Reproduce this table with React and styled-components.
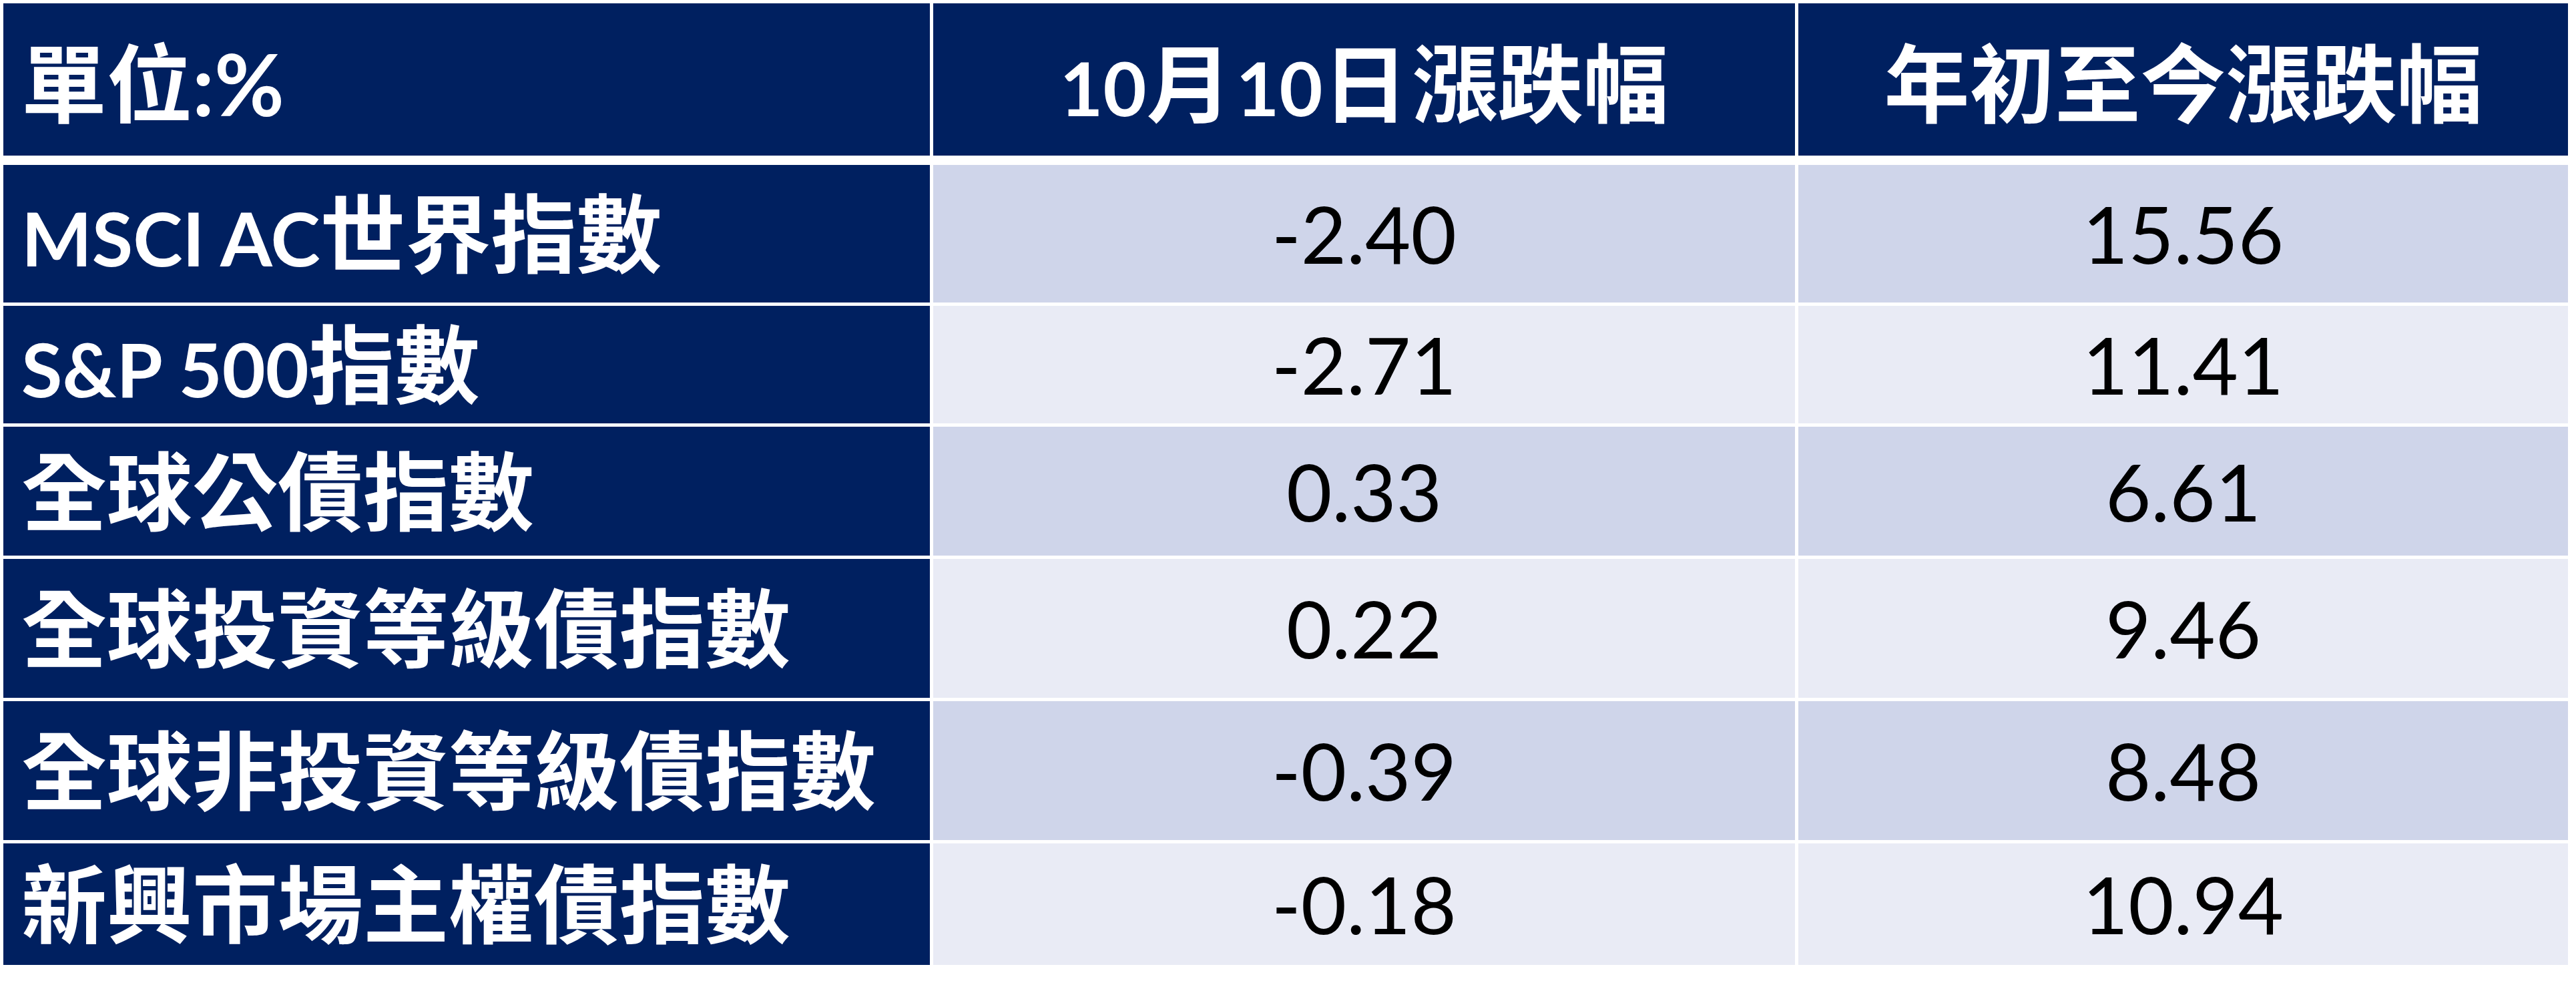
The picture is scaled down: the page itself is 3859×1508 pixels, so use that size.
import React from 'react';
import styled, { createGlobalStyle } from 'styled-components';

const GlobalStyle = createGlobalStyle`
  html, body {
    margin: 0;
    padding: 0;
    background: #ffffff;
  }
  body {
    font-family: Lato, "Noto Sans CJK TC", sans-serif;
  }
`;

const Page = styled.div`
  width: 3859px;
  height: 1508px;
  box-sizing: border-box;
  padding: 5px 0 0 5px;
  background: #ffffff;
`;

const Table = styled.div`
  display: flex;
  flex-direction: column;
  gap: 5px;
  width: 3842px;
`;

const Row = styled.div`
  display: grid;
  grid-template-columns: 1388px 1291px 1153px;
  column-gap: 5px;
  height: ${(p) => p.$h}px;
  margin-bottom: ${(p) => (p.$head ? 9 : 0)}px;
`;

const bgFor = (v) =>
  v === 'navy' ? '#002060' : v === 'odd' ? '#CFD5EA' : '#E9EBF5';

const Cell = styled.div`
  display: flex;
  align-items: center;
  justify-content: ${(p) => (p.$center ? 'center' : 'flex-start')};
  padding-left: ${(p) => (p.$center ? 0 : 27)}px;
  background: ${(p) => bgFor(p.$bg)};
  color: ${(p) => (p.$bg === 'navy' ? '#ffffff' : '#000000')};
  white-space: nowrap;
  overflow: hidden;
`;

const LabelText = styled.span`
  font-family: Lato, "Noto Sans CJK TC", sans-serif;
  font-weight: 700;
  font-size: 128px;
  line-height: 1;
  transform: translateY(${(p) => p.$dy || 0}px);
`;

const Latin = styled.span`
  font-size: 112px;
  margin-right: ${(p) => p.$gap || 0}px;
`;

const NumText = styled.span`
  font-family: Lato, "Noto Sans CJK TC", sans-serif;
  font-weight: 400;
  font-size: 118px;
  line-height: 1;
`;

const Gap = styled.span`
  display: inline-block;
  width: ${(p) => p.$w}px;
`;

const rows = [
  { h: 206, label: [['MSCI AC', true], ['世界指數', false]], a: '-2.40', b: '15.56' },
  { h: 176, label: [['S&P 500', true], ['指數', false]], a: '-2.71', b: '11.41' },
  { h: 193, label: [['全球公債指數', false]], a: '0.33', b: '6.61' },
  { h: 208, label: [['全球投資等級債指數', false]], a: '0.22', b: '9.46' },
  { h: 208, label: [['全球非投資等級債指數', false]], a: '-0.39', b: '8.48' },
  { h: 182, label: [['新興市場主權債指數', false]], a: '-0.18', b: '10.94' },
];

const Label = ({ parts }) => (
  <LabelText>
    {parts.map(([t, lat], i) =>
      lat ? <Latin key={i}>{t}</Latin> : <React.Fragment key={i}>{t}</React.Fragment>
    )}
  </LabelText>
);

export default function App() {
  return (
    <>
      <GlobalStyle />
      <Page>
        <Table>
          <Row $h={228} $head>
            <Cell $bg="navy">
              <LabelText $dy={6}>單位:%</LabelText>
            </Cell>
            <Cell $bg="navy" $center>
              <LabelText $dy={6}>
                <Latin>10</Latin>月<Gap $w={6} />
                <Latin>10</Latin>日<Gap $w={6} />漲跌幅
              </LabelText>
            </Cell>
            <Cell $bg="navy" $center>
              <LabelText $dy={6}>年初至今漲跌幅</LabelText>
            </Cell>
          </Row>
          {rows.map((r, i) => {
            const bg = i % 2 === 0 ? 'odd' : 'even';
            return (
              <Row key={i} $h={r.h}>
                <Cell $bg="navy">
                  <Label parts={r.label} />
                </Cell>
                <Cell $bg={bg} $center>
                  <NumText>{r.a}</NumText>
                </Cell>
                <Cell $bg={bg} $center>
                  <NumText>{r.b}</NumText>
                </Cell>
              </Row>
            );
          })}
        </Table>
      </Page>
    </>
  );
}
